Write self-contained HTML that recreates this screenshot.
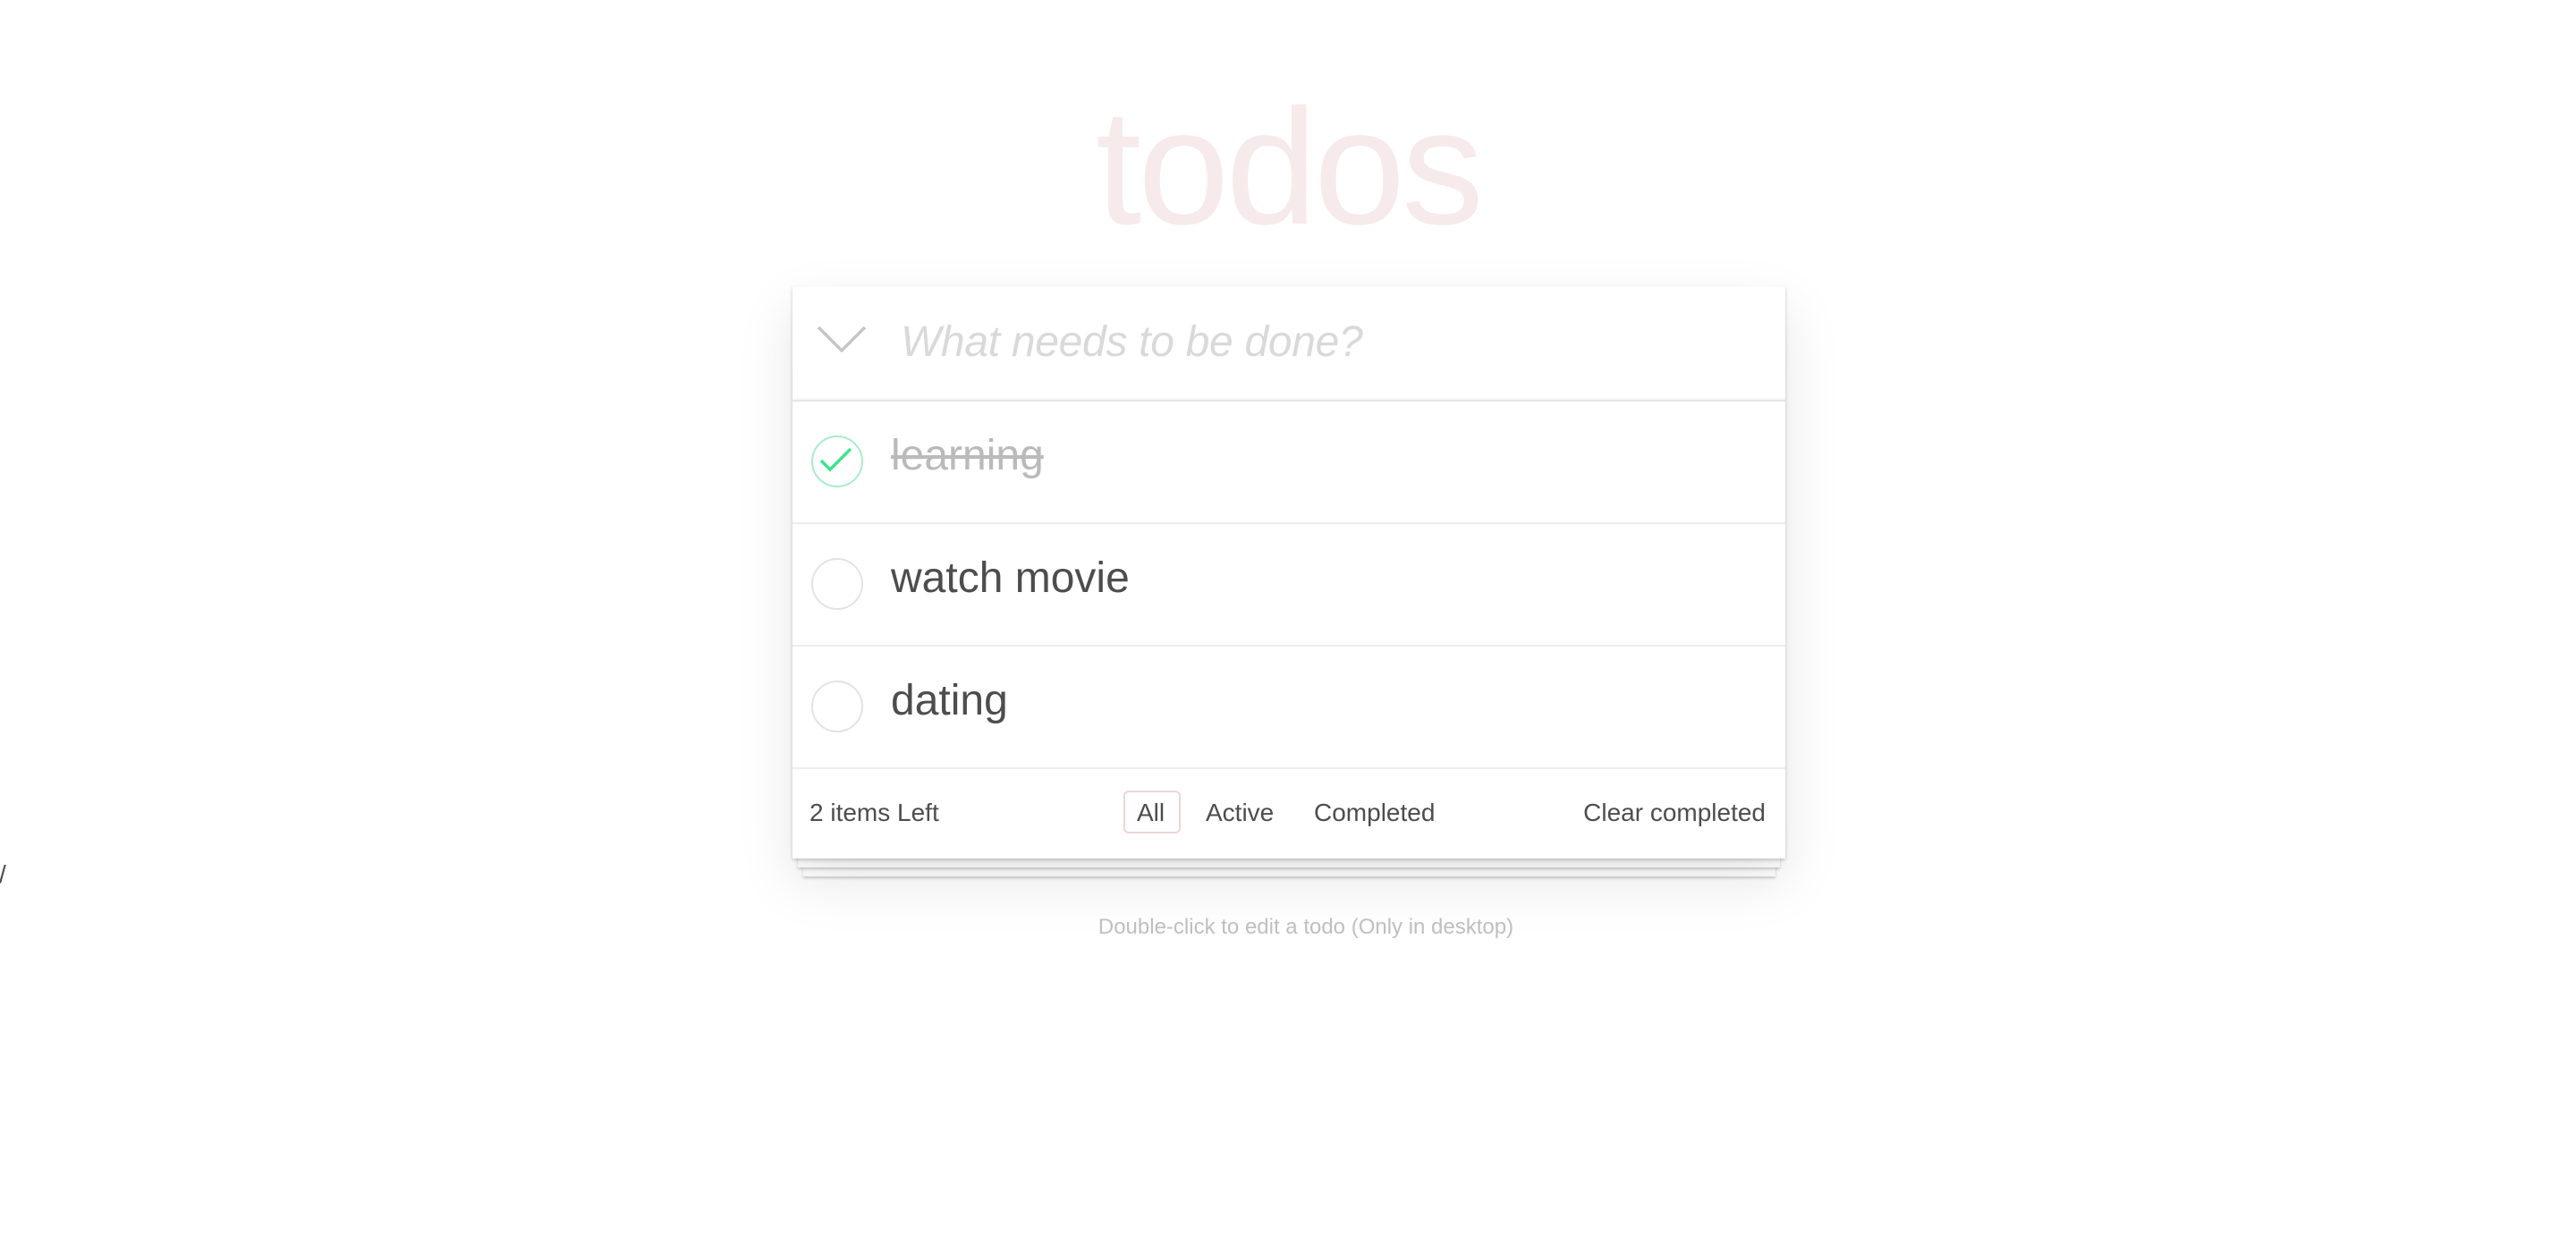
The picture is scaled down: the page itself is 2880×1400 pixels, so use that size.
<!DOCTYPE html>
<html><head><meta charset="utf-8">
<style>
html,body{margin:0;padding:0;background:#fff;width:2880px;height:1400px;overflow:hidden;font-family:"Liberation Sans",sans-serif;}
.abs{position:absolute;}
h1{position:absolute;left:0;width:2880px;top:66px;margin:0;text-align:center;font-size:184px;font-weight:100;color:rgba(175,47,47,0.1);line-height:240px;letter-spacing:-4px;}
.sheet{position:absolute;background:#fff;box-shadow:0 2px 3px rgba(0,0,0,0.2);}
.card{position:absolute;left:886px;top:320px;width:1110px;height:640px;background:#fff;box-shadow:0 2px 4px rgba(0,0,0,0.2),0 25px 60px rgba(0,0,0,0.1);}
.row{position:absolute;left:0;width:1110px;border-bottom:2px solid #ededed;}
.circ{position:absolute;left:21px;width:54px;height:54px;border:2px solid #e3e3e3;border-radius:50%;}
.txt{position:absolute;left:110px;font-size:48px;color:#4d4d4d;white-space:nowrap;}
.f{position:absolute;font-size:28px;color:#4d4d4d;white-space:nowrap;top:573px;}
</style></head><body>
<h1>todos</h1>
<div class="sheet" style="left:898px;top:960px;width:1087px;height:20px"></div>
<div class="sheet" style="left:892px;top:950px;width:1098px;height:20px"></div>
<div class="card">
  <div class="row" style="top:0;height:127px;border-bottom:2px solid #e6e6e6;box-shadow:inset 0 -2px 1px rgba(0,0,0,0.03)">
    <svg class="abs" style="left:27px;top:44px" width="56" height="32"><path d="M2 2 L28 28 L54 2" fill="none" stroke="#c5c5c5" stroke-width="3.5"/></svg>
    <div class="abs" style="left:121px;top:35px;font-size:48px;font-style:italic;color:#d9d9d9;white-space:nowrap;letter-spacing:-0.3px">What needs to be done?</div>
  </div>
  <div class="row" style="top:129px;height:135px">
    <div class="circ" style="top:38px;border-color:#a8ecc8"></div>
    <svg class="abs" style="left:28px;top:52px" width="40" height="34"><path d="M4 14 L14 24 L37 1" fill="none" stroke="#3de38e" stroke-width="3.5"/></svg>
    <div class="txt" style="top:33px;color:#bababa;text-decoration:line-through">learning</div>
  </div>
  <div class="row" style="top:266px;height:135px">
    <div class="circ" style="top:38px"></div>
    <div class="txt" style="top:33px">watch movie</div>
  </div>
  <div class="row" style="top:403px;height:135px">
    <div class="circ" style="top:38px"></div>
    <div class="txt" style="top:33px">dating</div>
  </div>
  <div class="f" style="left:19px">2 items Left</div>
  <div class="abs" style="left:370px;top:564px;width:60px;height:44px;border:2px solid rgba(175,47,47,0.2);border-radius:6px"></div>
  <div class="f" style="left:385px">All</div>
  <div class="f" style="left:462px">Active</div>
  <div class="f" style="left:583px">Completed</div>
  <div class="f" style="right:22px">Clear completed</div>
</div>
<div class="abs" style="left:0;width:2920px;top:1023px;text-align:center;font-size:24px;color:#bfbfbf">Double-click to edit a todo (Only in desktop)</div>
<div class="abs" style="left:-1px;top:962px;font-size:28px;color:#4d4d4d">/</div>
</body></html>
